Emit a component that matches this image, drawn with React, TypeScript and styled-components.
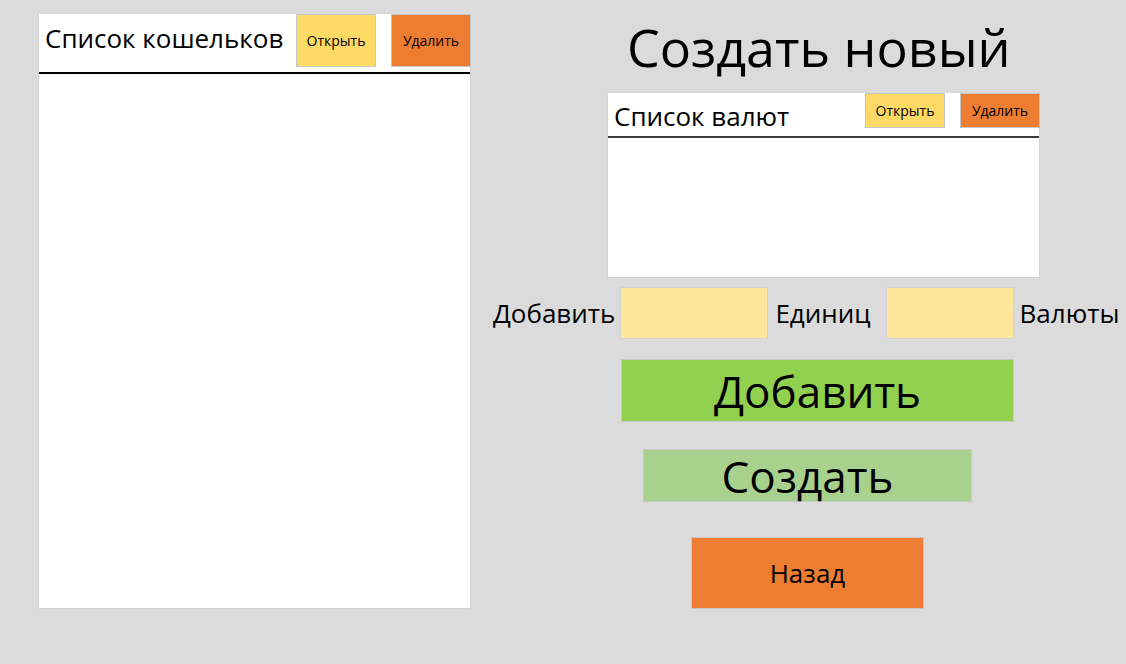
import React from 'react'
import styled, { createGlobalStyle } from 'styled-components'

const GlobalStyle = createGlobalStyle`
	html, body {
		margin: 0;
		padding: 0;
		background: #dbdbdb;
		font-family: 'Open Sans', 'Noto Sans', sans-serif;
		color: #000;
	}
`

const Page = styled.div`
	display: flex;
	align-items: flex-start;
	width: 1126px;
	height: 664px;
	box-sizing: border-box;
	padding: 14px 0 0 38px;
`

const ListPanel = styled.div<{ $w: number; $h: number; $line: string }>`
	display: flex;
	flex-direction: column;
	width: ${(p) => p.$w}px;
	height: ${(p) => p.$h}px;
	background: #fff;
	box-sizing: border-box;
	border: 1px solid #d4d4d4;
	border-top: none;
	--line: ${(p) => p.$line};
`

const PanelHead = styled.div<{ $h: number }>`
	display: flex;
	align-items: flex-start;
	height: ${(p) => p.$h}px;
	border-bottom: 2px solid var(--line);
	flex-shrink: 0;
`

const PanelTitle = styled.div<{ $top: number }>`
	flex: 1;
	font-size: 26px;
	line-height: 1;
	padding: ${(p) => p.$top}px 0 0 6px;
	white-space: nowrap;
`

const SmallBtn = styled.div<{ $bg: string; $h: number; $gap: number }>`
	display: flex;
	align-items: center;
	justify-content: center;
	width: 80px;
	height: ${(p) => p.$h}px;
	margin-left: ${(p) => p.$gap}px;
	margin-right: -1px;
	box-sizing: border-box;
	border: 1px solid #c6c6c6;
	background: ${(p) => p.$bg};
	font-size: 14px;
`

const RightCol = styled.div`
	display: flex;
	flex-direction: column;
	align-items: flex-start;
	margin-left: 22px;
`

const Heading = styled.div`
	margin-left: 134px;
	font-size: 52px;
	line-height: 1;
	height: 79px;
	padding-top: 7px;
	box-sizing: border-box;
	white-space: nowrap;
`

const Shift = styled.div<{ $x: number; $y: number }>`
	margin-left: ${(p) => p.$x}px;
	margin-top: ${(p) => p.$y}px;
`

const AddRow = styled.div`
	display: flex;
	align-items: center;
	margin-top: 9px;
	height: 52px;
	font-size: 26px;
`

const RowLabel = styled.span<{ $l: number; $r: number }>`
	margin: 0 ${(p) => p.$r}px 0 ${(p) => p.$l}px;
	white-space: nowrap;
`

const Field = styled.div<{ $w: number }>`
	width: ${(p) => p.$w}px;
	height: 52px;
	box-sizing: border-box;
	border: 1px solid #d2d2d2;
	background: #ffe699;
`

const BigBtn = styled.div<{ $bg: string; $w: number; $h: number; $fs: number; $x: number; $y: number }>`
	display: flex;
	align-items: center;
	justify-content: center;
	width: ${(p) => p.$w}px;
	height: ${(p) => p.$h}px;
	margin: ${(p) => p.$y}px 0 0 ${(p) => p.$x}px;
	box-sizing: border-box;
	border: 1px solid #c8c8c8;
	background: ${(p) => p.$bg};
	font-size: ${(p) => p.$fs}px;
	line-height: 1;
	white-space: nowrap;
`

export default function App() {
	return (
		<>
			<GlobalStyle />
			<Page>
				<ListPanel $w={433} $h={595} $line="#000">
					<PanelHead $h={58}>
						<PanelTitle $top={11}>Список кошельков</PanelTitle>
						<SmallBtn $bg="#ffd966" $h={53} $gap={0}>Открыть</SmallBtn>
						<SmallBtn $bg="#ed7d31" $h={53} $gap={16}>Удалить</SmallBtn>
					</PanelHead>
				</ListPanel>
				<RightCol>
					<Heading>Создать новый</Heading>
					<Shift $x={114} $y={0}>
						<ListPanel $w={433} $h={185} $line="#3a3a3a">
							<PanelHead $h={43}>
								<PanelTitle $top={10}>Список валют</PanelTitle>
								<SmallBtn $bg="#ffd966" $h={35} $gap={0}>Открыть</SmallBtn>
								<SmallBtn $bg="#ed7d31" $h={35} $gap={16}>Удалить</SmallBtn>
							</PanelHead>
						</ListPanel>
					</Shift>
					<AddRow>
						<RowLabel $l={0} $r={5}>Добавить</RowLabel>
						<Field $w={148} />
						<RowLabel $l={7} $r={15}>Единиц</RowLabel>
						<Field $w={128} />
						<RowLabel $l={6} $r={0}>Валюты</RowLabel>
					</AddRow>
					<BigBtn $bg="#92d050" $w={393} $h={63} $fs={44} $x={128} $y={20}>Добавить</BigBtn>
					<BigBtn $bg="#a9d18e" $w={329} $h={53} $fs={44} $x={150} $y={27}>Создать</BigBtn>
					<BigBtn $bg="#ed7d31" $w={233} $h={72} $fs={26} $x={198} $y={35}>Назад</BigBtn>
				</RightCol>
			</Page>
		</>
	)
}
